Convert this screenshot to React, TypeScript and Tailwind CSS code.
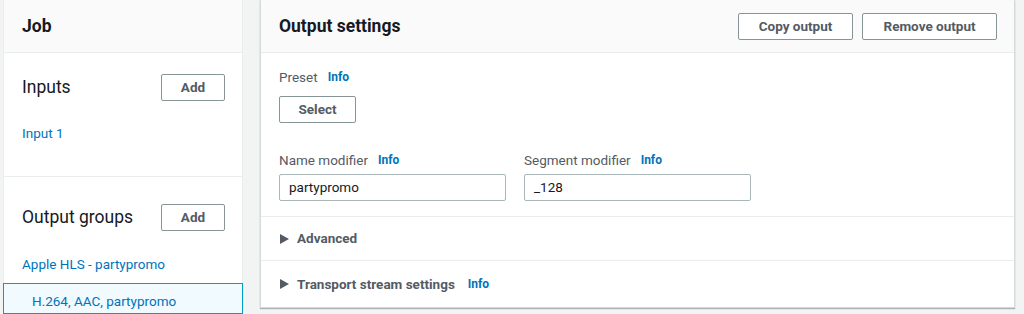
import type { ReactNode } from 'react'

const font = { fontFamily: 'Roboto, "Noto Sans", sans-serif' }

function Btn({ children, className = '' }: { children: ReactNode; className?: string }) {
  return (
    <button
      className={`h-[27px] rounded-[2px] border border-[#879596] bg-white text-[13.5px] font-bold text-[#545b64] ${className}`}
    >
      {children}
    </button>
  )
}

function Info() {
  return <span className="ml-[10px] text-[12px] font-bold text-[#0073bb]">Info</span>
}

function Caret() {
  return (
    <svg width="9" height="10" viewBox="0 0 9 10" className="mr-[8px] shrink-0">
      <path d="M0 0 L9 5 L0 10 Z" fill="#545b64" />
    </svg>
  )
}

function TextField({ value }: { value: string }) {
  return (
    <div className="flex h-[27px] w-[227px] items-center rounded-[2px] border border-[#aab7b8] bg-white px-[9px] text-[13.5px] text-[#16191f]">
      {value}
    </div>
  )
}

function Label({ children }: { children: ReactNode }) {
  return <div className="flex h-[16px] items-center text-[13.5px] text-[#545b64]">{children}</div>
}

function JobPanel() {
  return (
    <aside className="flex h-full w-[240px] shrink-0 flex-col border-x border-[#eaeded] bg-white">
      <div className="flex h-[53px] shrink-0 items-center border-b border-[#eaeded] bg-[#fafafa] pl-[18px] text-[17.5px] font-bold text-[#16191f]">
        Job
      </div>
      <div className="h-[124px] shrink-0 border-b border-[#eaeded]">
        <div className="flex items-center justify-between pt-[21px] pl-[18px] pr-[17px]">
          <span className="text-[17.5px] text-[#16191f]">Inputs</span>
          <Btn className="w-[64px]">Add</Btn>
        </div>
        <div className="pt-[22px] pl-[18px] text-[13.5px] text-[#0073bb]">Input 1</div>
      </div>
      <div className="flex items-center justify-between pt-[27px] pl-[18px] pr-[17px]">
        <span className="text-[17.5px] text-[#16191f]">Output groups</span>
        <Btn className="w-[64px]">Add</Btn>
      </div>
      <div className="pt-[23px] pl-[18px] text-[13.5px] text-[#0073bb]">Apple HLS - partypromo</div>
      <div className="mt-[9px] -mx-px flex-1 border border-[#00a1c9] bg-[#f1faff] pt-[7px] pl-[28px] text-[13.5px] text-[#0073bb]">
        H.264, AAC, partypromo
      </div>
    </aside>
  )
}

function OutputSettings() {
  return (
    <section className="h-[308px] w-[755px] shrink-0 border-x border-b border-[#d5dbdb] bg-white shadow-[0_1px_1px_0_rgba(0,28,36,0.3)]">
      <div className="flex h-[53px] items-center justify-between border-b border-[#eaeded] bg-[#fafafa] pl-[18px] pr-[17px]">
        <h2 className="text-[17.5px] font-bold text-[#16191f]">Output settings</h2>
        <div className="flex gap-[9px]">
          <Btn className="w-[115px]">Copy output</Btn>
          <Btn className="w-[135px]">Remove output</Btn>
        </div>
      </div>
      <div className="flex h-[164px] flex-col items-start border-b border-[#eaeded] pt-[16px] pl-[18px]">
        <Label>
          Preset
          <Info />
        </Label>
        <Btn className="mt-[11px] w-[77px]">Select</Btn>
        <div className="mt-[29px] flex gap-[18px]">
          <div>
            <Label>
              Name modifier
              <Info />
            </Label>
            <div className="mt-[6px]">
              <TextField value="partypromo" />
            </div>
          </div>
          <div>
            <Label>
              Segment modifier
              <Info />
            </Label>
            <div className="mt-[6px]">
              <TextField value="_128" />
            </div>
          </div>
        </div>
      </div>
      <div className="flex h-[44px] items-center border-b border-[#eaeded] pl-[19px] text-[13.5px] font-bold text-[#545b64]">
        <Caret />
        Advanced
      </div>
      <div className="flex h-[46px] items-center pl-[19px] text-[13.5px] font-bold text-[#545b64]">
        <Caret />
        Transport stream settings
        <span className="ml-[13px] text-[12px] font-bold text-[#0073bb]">Info</span>
      </div>
    </section>
  )
}

export default function App() {
  return (
    <div style={font} className="flex h-[314px] w-[1024px] gap-[17px] overflow-hidden bg-[#f2f3f3] pl-[3px]">
      <JobPanel />
      <OutputSettings />
    </div>
  )
}
